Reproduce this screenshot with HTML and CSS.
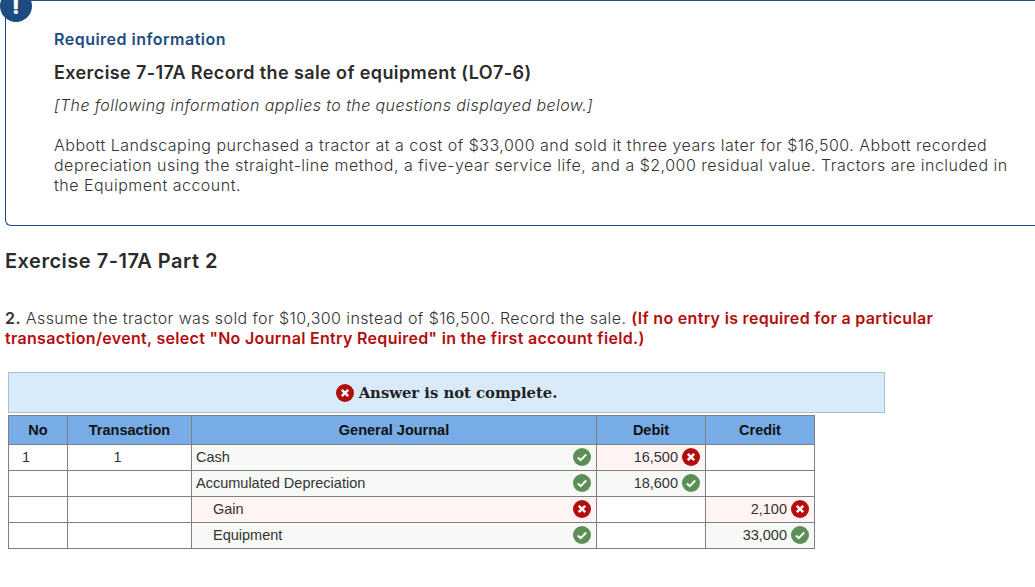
FILE: index.html
```html
<!DOCTYPE html>
<html lang="en">

<head>
    <meta charset="UTF-8">
    <meta name="viewport" content="width=device-width, initial-scale=1.0">
    <title>Exercise 7-17A</title>
    <link rel="stylesheet" href="styles.css">
</head>

<body>
    <section class="info-box">
        <span class="alert-badge">!</span>
        <h4 class="info-label">Required information</h4>
        <h3 class="info-title">Exercise 7-17A Record the sale of equipment (LO7-6)</h3>
        <p class="info-note">[The following information applies to the questions displayed below.]</p>
        <p class="info-text">Abbott Landscaping purchased a tractor at a cost of $33,000 and sold it three years later for $16,500. Abbott recorded depreciation using the straight-line method, a five-year service life, and a $2,000 residual value. Tractors are included in the Equipment account.</p>
    </section>

    <h2 class="part-title">Exercise 7-17A Part 2</h2>

    <p class="question"><strong>2.</strong> Assume the tractor was sold for $10,300 instead of $16,500. Record the sale. <strong class="question-hint">(If no entry is required for a particular transaction/event, select "No Journal Entry Required" in the first account field.)</strong></p>

    <section class="answer">
        <div class="answer-banner">
            <svg class="mark" viewBox="0 0 18 18"><circle cx="9" cy="9" r="9" fill="#b30e0e"/><path d="M5.8 5.8l6.4 6.4M12.2 5.8l-6.4 6.4" stroke="#fff" stroke-width="2.4" fill="none"/></svg>
            <span>Answer is not complete.</span>
        </div>

        <table class="journal">
            <thead>
                <tr>
                    <th class="col-no">No</th>
                    <th class="col-trans">Transaction</th>
                    <th class="col-account">General Journal</th>
                    <th class="col-money">Debit</th>
                    <th class="col-money">Credit</th>
                </tr>
            </thead>
            <tbody>
                <tr>
                    <td class="center">1</td>
                    <td class="center">1</td>
                    <td class="right-ok">
                        <div class="cell-row"><span>Cash</span>
                            <svg class="mark" viewBox="0 0 18 18"><circle cx="9" cy="9" r="9" fill="#5a8f55"/><path d="M4.8 9.4l2.9 2.7 5.5-5.6" stroke="#fff" stroke-width="2" fill="none"/></svg>
                        </div>
                    </td>
                    <td class="wrong">
                        <div class="cell-row amount"><span>16,500</span>
                            <svg class="mark" viewBox="0 0 18 18"><circle cx="9" cy="9" r="9" fill="#b30e0e"/><path d="M5.8 5.8l6.4 6.4M12.2 5.8l-6.4 6.4" stroke="#fff" stroke-width="2.4" fill="none"/></svg>
                        </div>
                    </td>
                    <td></td>
                </tr>
                <tr>
                    <td></td>
                    <td></td>
                    <td class="right-ok">
                        <div class="cell-row"><span>Accumulated Depreciation</span>
                            <svg class="mark" viewBox="0 0 18 18"><circle cx="9" cy="9" r="9" fill="#5a8f55"/><path d="M4.8 9.4l2.9 2.7 5.5-5.6" stroke="#fff" stroke-width="2" fill="none"/></svg>
                        </div>
                    </td>
                    <td class="right-ok">
                        <div class="cell-row amount"><span>18,600</span>
                            <svg class="mark" viewBox="0 0 18 18"><circle cx="9" cy="9" r="9" fill="#5a8f55"/><path d="M4.8 9.4l2.9 2.7 5.5-5.6" stroke="#fff" stroke-width="2" fill="none"/></svg>
                        </div>
                    </td>
                    <td></td>
                </tr>
                <tr>
                    <td></td>
                    <td></td>
                    <td class="wrong">
                        <div class="cell-row indent"><span>Gain</span>
                            <svg class="mark" viewBox="0 0 18 18"><circle cx="9" cy="9" r="9" fill="#b30e0e"/><path d="M5.8 5.8l6.4 6.4M12.2 5.8l-6.4 6.4" stroke="#fff" stroke-width="2.4" fill="none"/></svg>
                        </div>
                    </td>
                    <td></td>
                    <td class="wrong">
                        <div class="cell-row amount"><span>2,100</span>
                            <svg class="mark" viewBox="0 0 18 18"><circle cx="9" cy="9" r="9" fill="#b30e0e"/><path d="M5.8 5.8l6.4 6.4M12.2 5.8l-6.4 6.4" stroke="#fff" stroke-width="2.4" fill="none"/></svg>
                        </div>
                    </td>
                </tr>
                <tr>
                    <td></td>
                    <td></td>
                    <td class="right-ok">
                        <div class="cell-row indent"><span>Equipment</span>
                            <svg class="mark" viewBox="0 0 18 18"><circle cx="9" cy="9" r="9" fill="#5a8f55"/><path d="M4.8 9.4l2.9 2.7 5.5-5.6" stroke="#fff" stroke-width="2" fill="none"/></svg>
                        </div>
                    </td>
                    <td></td>
                    <td class="right-ok">
                        <div class="cell-row amount"><span>33,000</span>
                            <svg class="mark" viewBox="0 0 18 18"><circle cx="9" cy="9" r="9" fill="#5a8f55"/><path d="M4.8 9.4l2.9 2.7 5.5-5.6" stroke="#fff" stroke-width="2" fill="none"/></svg>
                        </div>
                    </td>
                </tr>
            </tbody>
        </table>
    </section>
</body>

</html>
```

FILE: styles.css
```css
body {
    margin: 0;
    font-family: "Inter", sans-serif;
    font-weight: 300;
    color: #333;
    overflow: hidden;
}

.info-box {
    position: relative;
    box-sizing: border-box;
    height: 226px;
    margin-left: 5px;
    margin-right: -10px;
    padding: 28px 40px 0 48px;
    border: 1px solid #1c4c82;
    border-right: 0;
    border-bottom-left-radius: 6px;
    font-size: 16px;
    line-height: 20px;
    letter-spacing: 0.49px;
}

.alert-badge {
    position: absolute;
    left: -6px;
    top: -11px;
    width: 32px;
    height: 32px;
    border-radius: 50%;
    background: #1c4c82;
    color: #fff;
    font-weight: 900;
    font-size: 20px;
    line-height: 34px;
    text-align: center;
}

.info-label {
    margin: 0 0 12px;
    font-size: 16px;
    font-weight: 600;
    color: #1c4c82;
}

.info-title {
    margin: 0 0 11px;
    font-size: 18px;
    line-height: 23px;
    font-weight: 600;
    letter-spacing: 0.4px;
    color: #2b2b2b;
}

.info-note {
    margin: 0 0 20px;
    font-style: italic;
    letter-spacing: 0.41px;
}

.info-text {
    margin: 0;
    width: 958px;
}

.part-title {
    margin: 22px 0 0 5px;
    font-size: 20px;
    line-height: 26px;
    font-weight: 600;
    letter-spacing: 0.5px;
    color: #2b2b2b;
}

.question {
    margin: 34px 20px 0 5px;
    font-size: 16px;
    line-height: 20px;
    letter-spacing: 0.41px;
}

.question strong {
    font-weight: 600;
}

.question .question-hint {
    letter-spacing: 0.31px;
    color: #b30e0e;
}

.answer {
    margin: 24px 0 0 8px;
}

.answer-banner {
    box-sizing: border-box;
    display: flex;
    justify-content: center;
    align-items: center;
    gap: 5px;
    width: 877px;
    height: 41px;
    margin-bottom: 2px;
    background: #d9ebfa;
    border: 1px solid #9cc3e5;
    font-family: "DejaVu Serif", serif;
    font-size: 14.8px;
    font-weight: 700;
    color: #222;
}

.mark {
    width: 18px;
    height: 18px;
    flex-shrink: 0;
}

.journal {
    border-collapse: collapse;
    table-layout: fixed;
    width: 807px;
    font-family: "Liberation Sans", sans-serif;
    font-weight: 400;
    font-size: 14.5px;
    color: #333;
}

.journal th,
.journal td {
    border: 1px solid #808080;
    padding: 0;
}

.journal th {
    height: 28px;
    background: #78ace6;
    color: #111;
    font-weight: 700;
}

.journal td {
    height: 25px;
}

.col-no {
    width: 58px;
}

.col-trans {
    width: 123px;
}

.col-money {
    width: 108px;
}

.journal td.center {
    height: 23px;
    padding: 0 24px 2px 0;
    text-align: center;
}

.right-ok {
    background: #f6f9f6;
}

.wrong {
    background: #fff4f3;
}

.cell-row {
    display: flex;
    justify-content: space-between;
    align-items: center;
    padding: 0 5px 2px 4px;
}

.indent {
    padding-left: 21px;
}

.amount {
    justify-content: flex-end;
    gap: 4px;
}
```
